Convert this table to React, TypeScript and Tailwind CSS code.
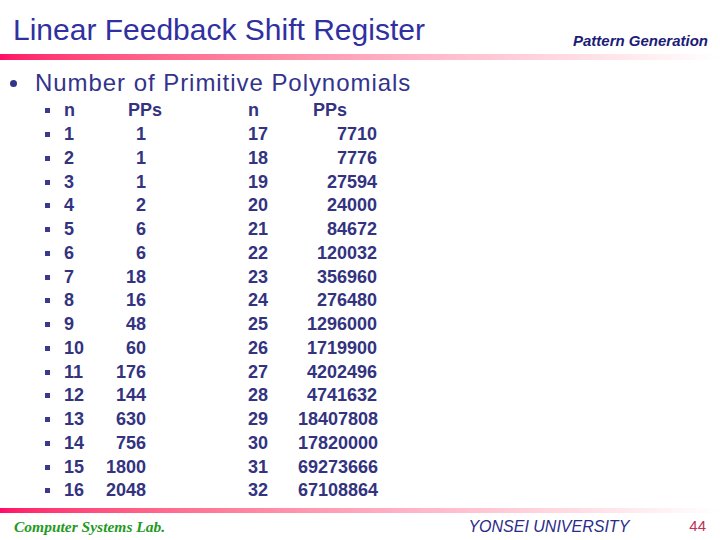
const rows: [string, string, string, string][] = [
  ["1", "1", "17", "7710"],
  ["2", "1", "18", "7776"],
  ["3", "1", "19", "27594"],
  ["4", "2", "20", "24000"],
  ["5", "6", "21", "84672"],
  ["6", "6", "22", "120032"],
  ["7", "18", "23", "356960"],
  ["8", "16", "24", "276480"],
  ["9", "48", "25", "1296000"],
  ["10", "60", "26", "1719900"],
  ["11", "176", "27", "4202496"],
  ["12", "144", "28", "4741632"],
  ["13", "630", "29", "18407808"],
  ["14", "756", "30", "17820000"],
  ["15", "1800", "31", "69273666"],
  ["16", "2048", "32", "67108864"],
];

function Bullet() {
  return (
    <span className="w-[19px] shrink-0 flex items-center">
      <span className="w-[5px] h-[5px] bg-[#3a3a8c]" />
    </span>
  );
}

export default function App() {
  return (
    <div className="w-[720px] h-[540px] bg-white flex flex-col font-['Liberation_Sans',Arial,sans-serif] overflow-hidden">
      {/* header */}
      <div className="flex items-end justify-between pl-[13px] pr-[12px] h-[53px]">
        <h1 className="text-[30px] leading-[34px] mb-[6px] text-[#3030a0]">Linear Feedback Shift Register</h1>
        <span className="text-[15px] italic font-bold text-[#1c1c78] mb-[1px]">Pattern Generation</span>
      </div>
      <div className="mt-[1px] h-[6px] w-full bg-gradient-to-r from-[#ff0a68] via-[#ffb0c4] via-55% to-white" />

      {/* body */}
      <div className="flex items-center pl-[10px] mt-[8px] h-[30px]">
        <span className="w-[7px] h-[7px] rounded-full bg-[#33338c]" />
        <span className="ml-[18px] text-[24px] tracking-[0.95px] text-[#33338c]">Number of Primitive Polynomials</span>
      </div>

      <div className="flex flex-col pl-[45px] mt-[1px] text-[18px] font-bold text-[#33337f]">
        <div className="flex h-[23.75px] items-center">
          <Bullet />
          <span className="w-[36px]">n</span>
          <span className="w-[46px] pl-[28px] whitespace-nowrap">PPs</span>
          <span className="w-[102px]" />
          <span className="w-[50px]">n</span>
          <span className="w-[79px] pl-[15px]">PPs</span>
        </div>
        {rows.map((r) => (
          <div key={r[0]} className="flex h-[23.75px] items-center">
            <Bullet />
            <span className="w-[36px]">{r[0]}</span>
            <span className="w-[46px] text-right">{r[1]}</span>
            <span className="w-[102px]" />
            <span className="w-[50px]">{r[2]}</span>
            <span className="w-[79px] text-right">{r[3]}</span>
          </div>
        ))}
      </div>

      {/* footer */}
      <div className="mt-auto h-[5px] w-full bg-gradient-to-r from-[#ff0a68] via-[#ffb0c4] via-55% to-white" />
      <div className="flex items-center h-[27px] pl-[14px] pr-[14px]">
        <span className="font-['Liberation_Serif',serif] italic font-bold text-[15.5px] text-[#1f9a1f]">Computer Systems Lab.</span>
        <span className="ml-auto italic text-[16px] text-[#2b2b8a]">YONSEI UNIVERSITY</span>
        <span className="ml-[60px] text-[15px] text-[#c0305a]">44</span>
      </div>
    </div>
  );
}
